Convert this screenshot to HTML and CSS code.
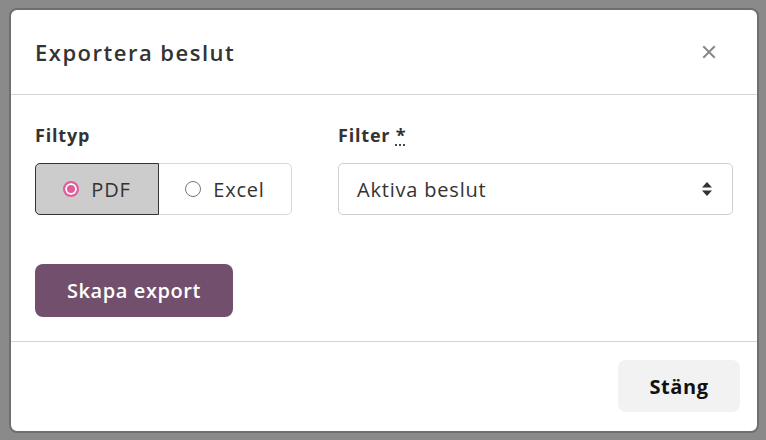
FILE: index.html
```html
<!DOCTYPE html>
<html lang="sv">
<head>
  <meta charset="UTF-8">
  <title>Exportera beslut</title>
  <link rel="stylesheet" href="styles.css">
</head>
<body>
  <div class="backdrop">
    <div class="modal">
      <div class="modal-header">
        <h2>Exportera beslut</h2>
        <button class="close" aria-label="Stäng">
          <svg width="14" height="14" viewBox="0 0 14 14"><path d="M2 2 L12 12 M12 2 L2 12" stroke="#888" stroke-width="2" stroke-linecap="square"/></svg>
        </button>
      </div>
      <div class="modal-body">
        <div class="fields">
          <div class="field filetype">
            <label class="field-label">Filtyp</label>
            <div class="segmented">
              <label class="segment active"><span class="radio checked"></span>PDF</label>
              <label class="segment"><span class="radio"></span>Excel</label>
            </div>
          </div>
          <div class="field filter">
            <label class="field-label">Filter <abbr title="obligatoriskt">*</abbr></label>
            <div class="select">
              <span>Aktiva beslut</span>
              <svg width="12" height="16" viewBox="0 0 12 16"><path d="M6 1 L11 6.5 H1 Z M6 15 L11 9.5 H1 Z" fill="#333"/></svg>
            </div>
          </div>
        </div>
        <button class="btn-primary">Skapa export</button>
      </div>
      <div class="modal-footer">
        <button class="btn-secondary">Stäng</button>
      </div>
    </div>
  </div>
</body>
</html>
```
FILE: styles.css
```css
body {
  margin: 0;
  font-family: "Open Sans", "Lato", sans-serif;
  background: #8a8a8a;
  color: #333;
}
.backdrop {
  height: 440px;
  padding: 8px 7px 0 9px;
  box-sizing: border-box;
}
.modal {
  background: #fff;
  border: 2px solid #6f6f6f;
  border-radius: 8px;
  height: 425px;
  box-sizing: border-box;
  display: flex;
  flex-direction: column;
}
.modal-header {
  display: flex;
  justify-content: space-between;
  align-items: center;
  height: 84px;
  padding: 0 41px 0 24px;
  border-bottom: 1px solid #d4d4d4;
}
.modal-header h2 {
  margin: 0;
  font-size: 22px;
  font-weight: 600;
  letter-spacing: 1.5px;
  color: #333;
}
.close {
  border: 0;
  background: none;
  padding: 0;
  display: flex;
}
.modal-body {
  padding: 28px 24px 24px;
  border-bottom: 1px solid #d4d4d4;
}
.fields {
  display: flex;
  gap: 46px;
  margin-bottom: 49px;
}
.field-label {
  display: block;
  font-size: 18px;
  font-weight: 700;
  line-height: 24px;
  letter-spacing: 0.8px;
  color: #333;
  margin-bottom: 16px;
}
.field-label abbr {
  text-decoration: underline dotted;
  text-underline-offset: 3px;
}
.segmented {
  display: flex;
  width: 257px;
  height: 52px;
  box-sizing: border-box;
  border: 1px solid #d8d8d8;
  border-radius: 5px;
}
.segment {
  display: flex;
  align-items: center;
  justify-content: center;
  gap: 12px;
  font-size: 20px;
  letter-spacing: 0.8px;
  color: #333;
}
.segment:first-child {
  width: 122px;
}
.segment:last-child {
  flex: 1;
}
.segment.active {
  background: #cccccc;
  border: 1px solid #333;
  border-radius: 5px 0 0 5px;
  margin: -1px 0 -1px -1px;
}
.radio {
  width: 16px;
  height: 16px;
  box-sizing: border-box;
  border: 1.5px solid #777;
  border-radius: 50%;
  background: #fff;
}
.radio.checked {
  border: 2px solid #e05c9a;
  background: #e05c9a;
  box-shadow: inset 0 0 0 2px #fff;
}
.filter {
  flex: 1;
}
.select {
  height: 52px;
  box-sizing: border-box;
  border: 1px solid #cfcfcf;
  border-radius: 5px;
  display: flex;
  align-items: center;
  justify-content: space-between;
  padding: 0 19px 0 18px;
  font-size: 20px;
  letter-spacing: 0.8px;
  color: #333;
}
.btn-primary {
  font-family: inherit;
  font-size: 20px;
  font-weight: 600;
  letter-spacing: 0.6px;
  color: #fff;
  background: #724f6c;
  border: 0;
  border-radius: 8px;
  width: 198px;
  height: 53px;
}
.modal-footer {
  display: flex;
  justify-content: flex-end;
  padding: 18px 17px 0 0;
}
.btn-secondary {
  font-family: inherit;
  font-size: 20px;
  font-weight: 700;
  letter-spacing: 0.6px;
  color: #111;
  background: #f2f2f2;
  border: 0;
  border-radius: 8px;
  width: 122px;
  height: 52px;
}
```
